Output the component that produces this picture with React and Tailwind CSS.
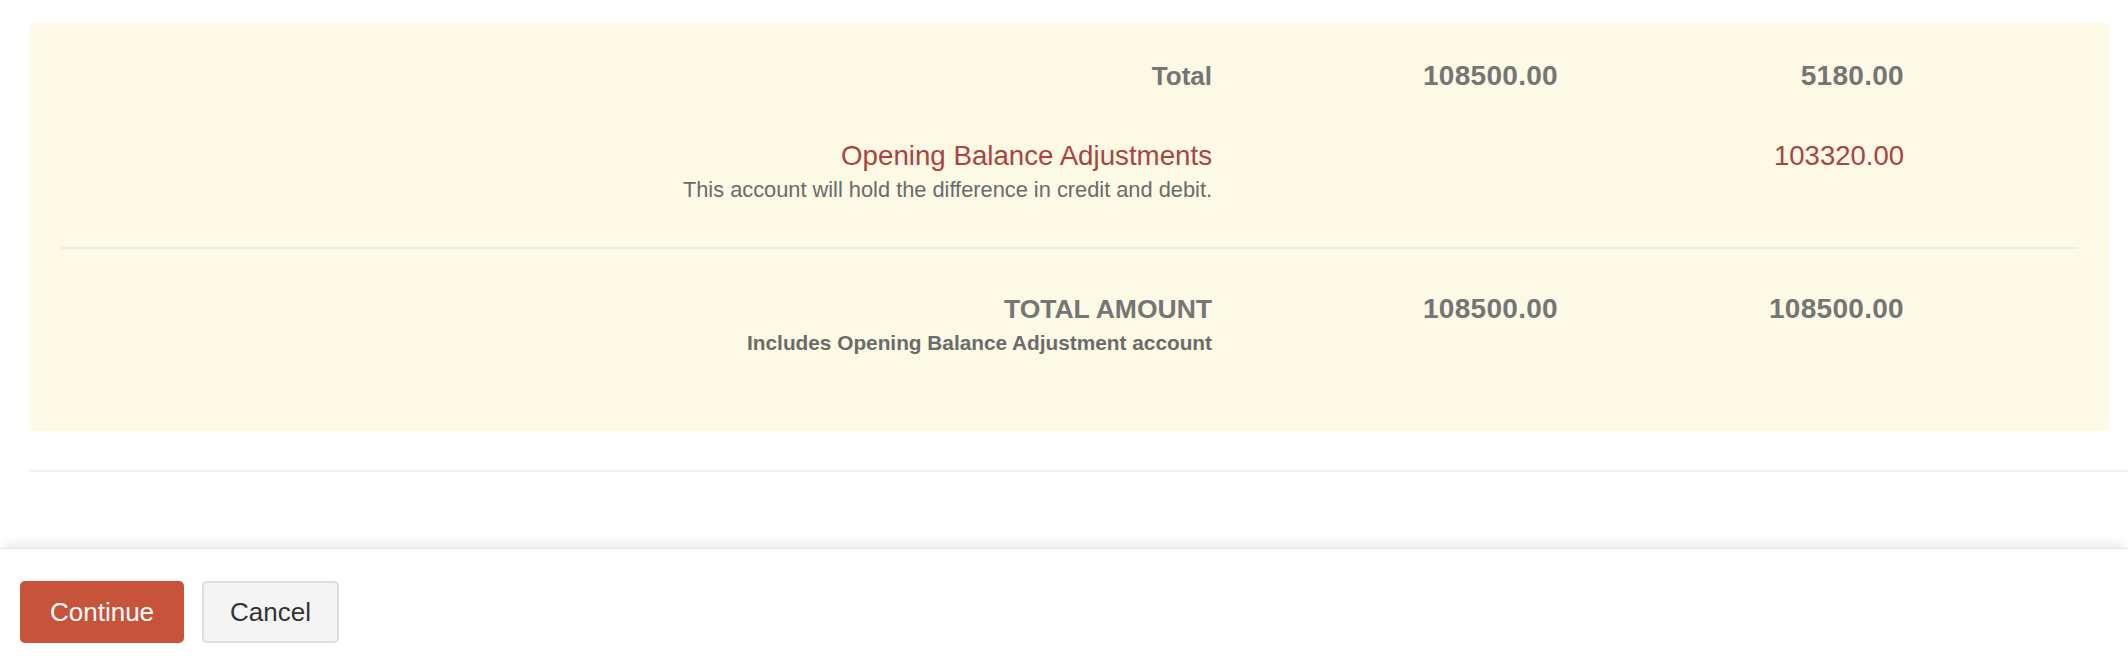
import React from 'react';

const Row = ({ label, sub, labelClass, subClass, debit, credit, numClass }) => (
  <div className="flex items-start">
    <div className="w-[1151px] text-right">
      <div className={labelClass}>{label}</div>
      {sub && <div className={subClass}>{sub}</div>}
    </div>
    <div className={`w-[346px] text-right ${numClass}`}>{debit}</div>
    <div className={`w-[346px] text-right ${numClass}`}>{credit}</div>
  </div>
);

export default function App() {
  return (
    <div className="h-[664px] w-full bg-white flex flex-col text-[#757575]" style={{ fontFamily: '"Liberation Sans", Arial, sans-serif' }}>
      <div className="flex-1 pt-[23px] pl-[30px] pr-[19px]">
        {/* Opening balance totals */}
        <div className="bg-[#fcf9e4] rounded-[3px] px-[31px] pt-[35px] pb-[72px]">
          <Row
            label="Total"
            labelClass="text-[26px] leading-[36px] font-bold"
            numClass="text-[28px] leading-[36px] font-bold tracking-[0.3px]"
            debit="108500.00"
            credit="5180.00"
          />
          <div className="mt-[44px]">
            <Row
              label="Opening Balance Adjustments"
              labelClass="text-[27.7px] leading-[36px] text-[#a94442]"
              sub="This account will hold the difference in credit and debit."
              subClass="text-[21.8px] leading-[32px] text-[#6b6b6b]"
              numClass="text-[27.5px] leading-[36px] text-[#a94442]"
              debit=""
              credit="103320.00"
            />
          </div>
          <div className="mt-[41px] mb-[42px] h-[2px] bg-[#ecebe4]"></div>
          <Row
            label="TOTAL AMOUNT"
            labelClass="text-[26.5px] leading-[36px] font-semibold"
            sub="Includes Opening Balance Adjustment account"
            subClass="text-[20.8px] leading-[32px] font-bold text-[#6b6b6b]"
            numClass="text-[28px] leading-[36px] font-bold tracking-[0.3px]"
            debit="108500.00"
            credit="108500.00"
          />
        </div>
        <div className="mt-[39px] -mr-[19px] h-[2px] bg-[#f0f0f0]"></div>
      </div>

      {/* Footer actions */}
      <div className="h-[116px] bg-white shadow-[0_-6px_12px_-3px_rgba(0,0,0,0.10)] border-t border-[#e6e6e6] px-[20px] pt-[32px] flex items-start gap-[18px]">
        <button type="button" className="h-[62px] px-[30px] rounded-[5px] bg-[#c7533b] text-white text-[26px]">
          Continue
        </button>
        <button type="button" className="h-[62px] px-[26px] rounded-[5px] bg-[#f4f4f4] border-2 border-[#dddddd] text-[#333333] text-[26px]">
          Cancel
        </button>
      </div>
    </div>
  );
}
